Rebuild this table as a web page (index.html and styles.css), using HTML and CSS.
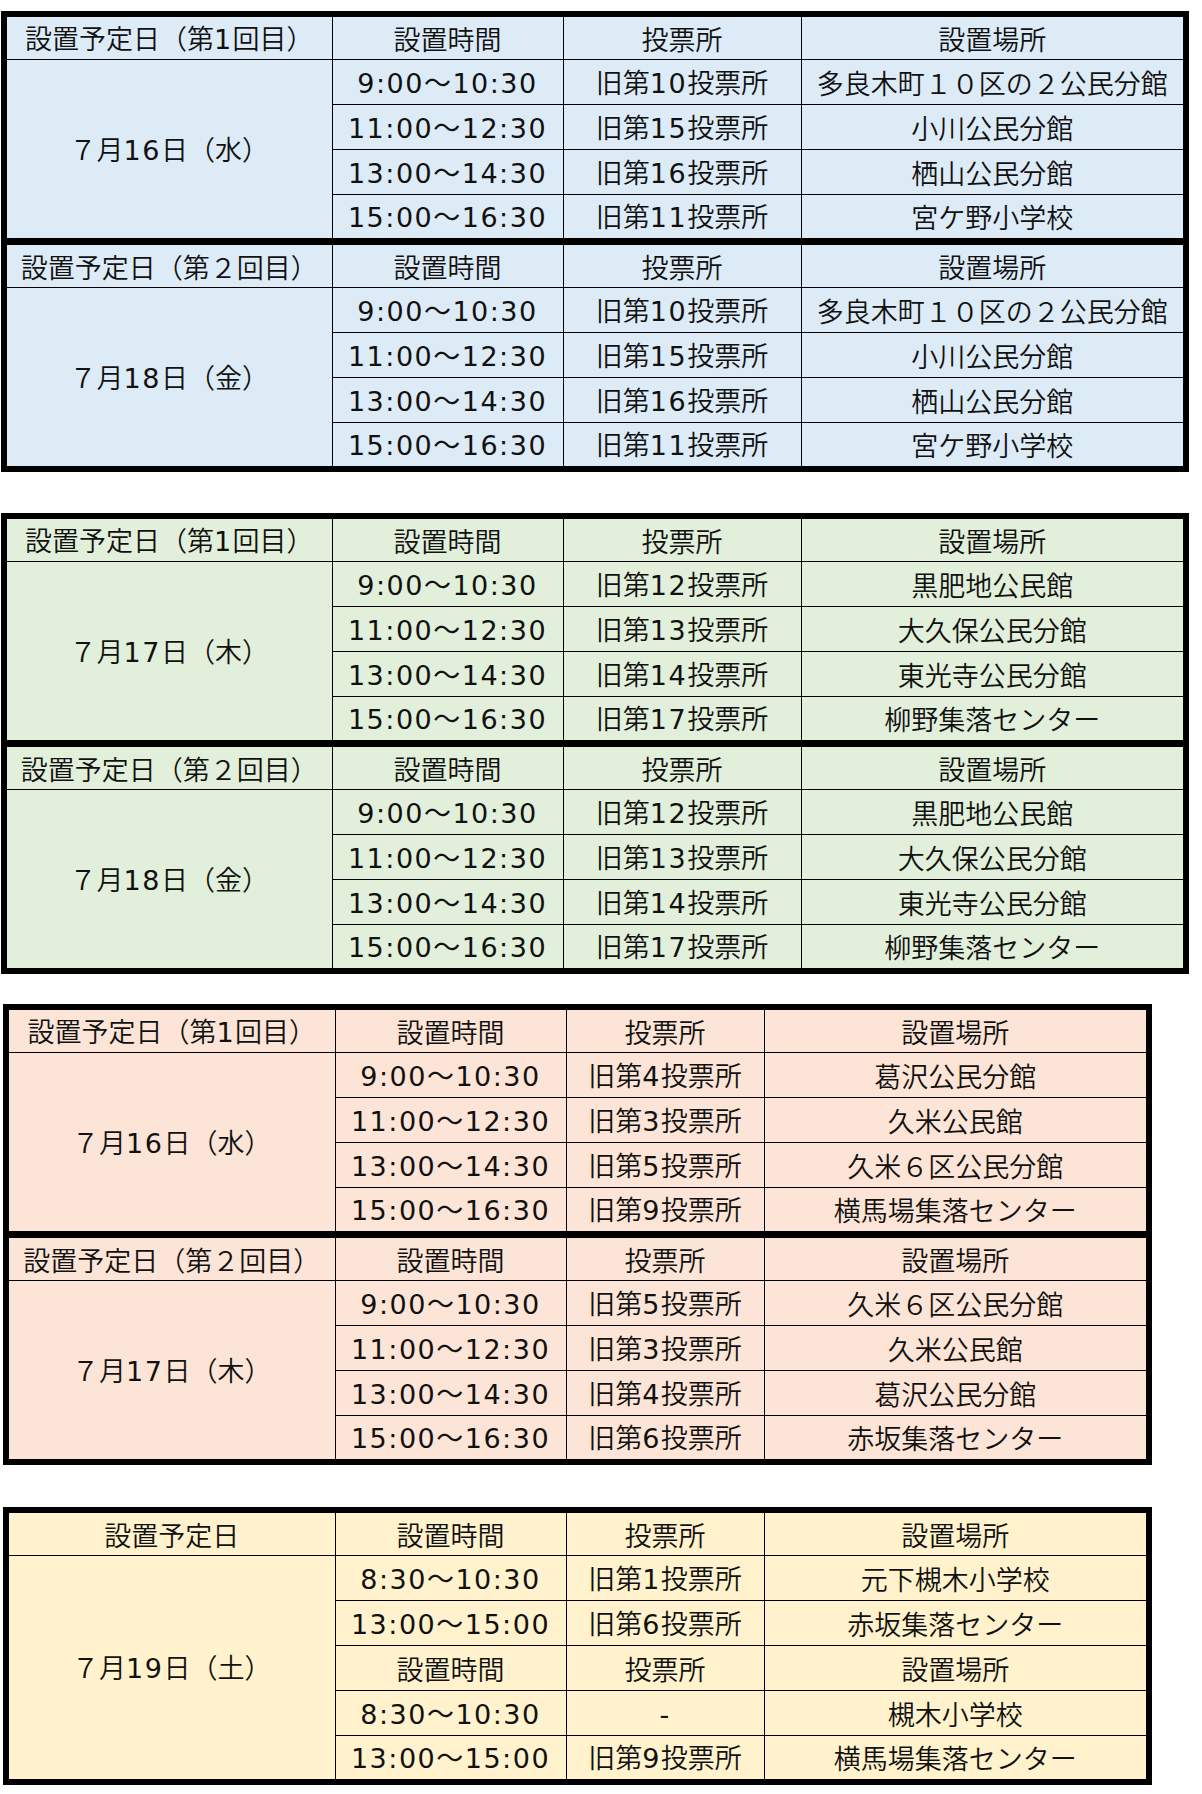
FILE: index.html
```html
<!DOCTYPE html>
<html lang="ja">
<head>
<meta charset="utf-8">
<title>期日前投票所 移動設置予定</title>
<link rel="stylesheet" href="styles.css">
</head>
<body>
<div class="sheet">

  <div class="tbl wide blue">
    <table>
      <colgroup><col class="c1w"><col class="c2w"><col class="c3w"><col class="c4w"></colgroup>
      <tbody>
        <tr class="hd"><td>設置予定日（第<span class="num">1</span>回目）</td><td>設置時間</td><td>投票所</td><td>設置場所</td></tr>
        <tr><td rowspan="4">７月<span class="num">16</span>日（水）</td><td><span class="num">9:00～10:30</span></td><td>旧第<span class="num">10</span>投票所</td><td>多良木町１０区の２公民分館</td></tr>
        <tr><td><span class="num">11:00～12:30</span></td><td>旧第<span class="num">15</span>投票所</td><td>小川公民分館</td></tr>
        <tr><td><span class="num">13:00～14:30</span></td><td>旧第<span class="num">16</span>投票所</td><td>栖山公民分館</td></tr>
        <tr class="last"><td><span class="num">15:00～16:30</span></td><td>旧第<span class="num">11</span>投票所</td><td>宮ケ野小学校</td></tr>
      </tbody>
      <tbody>
        <tr class="hd"><td>設置予定日（第２回目）</td><td>設置時間</td><td>投票所</td><td>設置場所</td></tr>
        <tr><td rowspan="4">７月<span class="num">18</span>日（金）</td><td><span class="num">9:00～10:30</span></td><td>旧第<span class="num">10</span>投票所</td><td>多良木町１０区の２公民分館</td></tr>
        <tr><td><span class="num">11:00～12:30</span></td><td>旧第<span class="num">15</span>投票所</td><td>小川公民分館</td></tr>
        <tr><td><span class="num">13:00～14:30</span></td><td>旧第<span class="num">16</span>投票所</td><td>栖山公民分館</td></tr>
        <tr class="last"><td><span class="num">15:00～16:30</span></td><td>旧第<span class="num">11</span>投票所</td><td>宮ケ野小学校</td></tr>
      </tbody>
    </table>
  </div>

  <div class="tbl wide green gap1">
    <table>
      <colgroup><col class="c1w"><col class="c2w"><col class="c3w"><col class="c4w"></colgroup>
      <tbody>
        <tr class="hd"><td>設置予定日（第<span class="num">1</span>回目）</td><td>設置時間</td><td>投票所</td><td>設置場所</td></tr>
        <tr><td rowspan="4">７月<span class="num">17</span>日（木）</td><td><span class="num">9:00～10:30</span></td><td>旧第<span class="num">12</span>投票所</td><td>黒肥地公民館</td></tr>
        <tr><td><span class="num">11:00～12:30</span></td><td>旧第<span class="num">13</span>投票所</td><td>大久保公民分館</td></tr>
        <tr><td><span class="num">13:00～14:30</span></td><td>旧第<span class="num">14</span>投票所</td><td>東光寺公民分館</td></tr>
        <tr class="last"><td><span class="num">15:00～16:30</span></td><td>旧第<span class="num">17</span>投票所</td><td>柳野集落センター</td></tr>
      </tbody>
      <tbody>
        <tr class="hd"><td>設置予定日（第２回目）</td><td>設置時間</td><td>投票所</td><td>設置場所</td></tr>
        <tr><td rowspan="4">７月<span class="num">18</span>日（金）</td><td><span class="num">9:00～10:30</span></td><td>旧第<span class="num">12</span>投票所</td><td>黒肥地公民館</td></tr>
        <tr><td><span class="num">11:00～12:30</span></td><td>旧第<span class="num">13</span>投票所</td><td>大久保公民分館</td></tr>
        <tr><td><span class="num">13:00～14:30</span></td><td>旧第<span class="num">14</span>投票所</td><td>東光寺公民分館</td></tr>
        <tr class="last"><td><span class="num">15:00～16:30</span></td><td>旧第<span class="num">17</span>投票所</td><td>柳野集落センター</td></tr>
      </tbody>
    </table>
  </div>

  <div class="tbl narrow peach gap2">
    <table>
      <colgroup><col class="c1n"><col class="c2n"><col class="c3n"><col class="c4n"></colgroup>
      <tbody>
        <tr class="hd"><td>設置予定日（第<span class="num">1</span>回目）</td><td>設置時間</td><td>投票所</td><td>設置場所</td></tr>
        <tr><td rowspan="4">７月<span class="num">16</span>日（水）</td><td><span class="num">9:00～10:30</span></td><td>旧第<span class="num">4</span>投票所</td><td>葛沢公民分館</td></tr>
        <tr><td><span class="num">11:00～12:30</span></td><td>旧第<span class="num">3</span>投票所</td><td>久米公民館</td></tr>
        <tr><td><span class="num">13:00～14:30</span></td><td>旧第<span class="num">5</span>投票所</td><td>久米６区公民分館</td></tr>
        <tr class="last"><td><span class="num">15:00～16:30</span></td><td>旧第<span class="num">9</span>投票所</td><td>横馬場集落センター</td></tr>
      </tbody>
      <tbody>
        <tr class="hd"><td>設置予定日（第２回目）</td><td>設置時間</td><td>投票所</td><td>設置場所</td></tr>
        <tr><td rowspan="4">７月<span class="num">17</span>日（木）</td><td><span class="num">9:00～10:30</span></td><td>旧第<span class="num">5</span>投票所</td><td>久米６区公民分館</td></tr>
        <tr><td><span class="num">11:00～12:30</span></td><td>旧第<span class="num">3</span>投票所</td><td>久米公民館</td></tr>
        <tr><td><span class="num">13:00～14:30</span></td><td>旧第<span class="num">4</span>投票所</td><td>葛沢公民分館</td></tr>
        <tr class="last"><td><span class="num">15:00～16:30</span></td><td>旧第<span class="num">6</span>投票所</td><td>赤坂集落センター</td></tr>
      </tbody>
    </table>
  </div>

  <div class="tbl narrow yellow gap3">
    <table>
      <colgroup><col class="c1n"><col class="c2n"><col class="c3n"><col class="c4n"></colgroup>
      <tbody>
        <tr class="hd"><td>設置予定日</td><td>設置時間</td><td>投票所</td><td>設置場所</td></tr>
        <tr><td rowspan="5">７月<span class="num">19</span>日（土）</td><td><span class="num">8:30～10:30</span></td><td>旧第<span class="num">1</span>投票所</td><td>元下槻木小学校</td></tr>
        <tr><td><span class="num">13:00～15:00</span></td><td>旧第<span class="num">6</span>投票所</td><td>赤坂集落センター</td></tr>
        <tr><td>設置時間</td><td>投票所</td><td>設置場所</td></tr>
        <tr><td><span class="num">8:30～10:30</span></td><td><span class="num">-</span></td><td>槻木小学校</td></tr>
        <tr class="last"><td><span class="num">13:00～15:00</span></td><td>旧第<span class="num">9</span>投票所</td><td>横馬場集落センター</td></tr>
      </tbody>
    </table>
  </div>

</div>
</body>
</html>
```

FILE: styles.css
```css
html, body {
  margin: 0;
  padding: 0;
  background: #ffffff;
}

body {
  font-family: "Noto Sans CJK JP", sans-serif;
  color: #111111;
}

.sheet {
  padding-top: 11px;
  display: flex;
  flex-direction: column;
  align-items: flex-start;
}

.tbl {
  border: 6px solid #000000;
  box-sizing: border-box;
}

.wide {
  width: 1188px;
  margin-left: 1px;
}

.narrow {
  width: 1149px;
  margin-left: 3px;
}

.gap1 { margin-top: 41px; }
.gap2 { margin-top: 30px; }
.gap3 { margin-top: 42px; }

.blue { background: #ddebf7; }
.green { background: #e2efda; }
.peach { background: #fce4d6; }
.yellow { background: #fff2cc; }

table {
  width: 100%;
  border-collapse: collapse;
  border-style: hidden;
  table-layout: fixed;
  font-size: 27px;
  font-weight: 350;
}

.c1w { width: 325px; }
.c2w { width: 231px; }
.c3w { width: 238px; }
.c4w { width: 382px; }

.c1n { width: 326px; }
.c2n { width: 231px; }
.c3n { width: 198px; }
.c4n { width: 382px; }

td {
  border: 1px solid #000000;
  padding: 0;
  height: 44px;
  line-height: 1;
  text-align: center;
  vertical-align: middle;
  white-space: nowrap;
}

tr.hd td {
  height: 42px;
}

tr.last td {
  height: 43px;
}

tbody + tbody {
  border-top: 7px solid #000000;
}

.num {
  font-family: "DejaVu Sans", "Noto Sans CJK JP", sans-serif;
  font-weight: 400;
  letter-spacing: 1.5px;
}
```
